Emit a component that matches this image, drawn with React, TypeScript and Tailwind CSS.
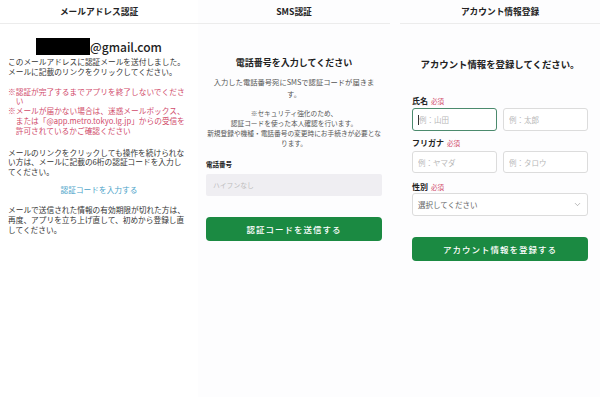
import { ChevronDown } from 'lucide-react';

const font = { fontFamily: '"Noto Sans CJK JP", "Noto Sans", sans-serif' };

const Header = ({ title }: { title: string }) => (
  <div className="h-[24px] flex items-center justify-center border-b border-[#ececec] text-[8.7px] font-bold text-[#222]">
    {title}
  </div>
);

const Required = () => <span className="ml-[3px] text-[6.5px] font-normal text-[#d14b6b]">必須</span>;

const Lines = ({ lines, className = '' }: { lines: string[]; className?: string }) => (
  <div className={className}>
    {lines.map((l, i) => (
      <div key={i} className="h-[9.8px] whitespace-nowrap">
        {l}
      </div>
    ))}
  </div>
);

const EmailPanel = () => (
  <div className="w-[198px] bg-white">
    <Header title="メールアドレス認証" />
    <div className="mt-[14px] flex justify-center items-center">
      <div className="w-[54px] h-[17px] bg-black" />
      <span className="text-[12px] leading-[17px] font-medium text-[#222]">@gmail.com</span>
    </div>
    <div className="px-2 text-[7.7px] leading-[9.8px] text-[#333]">
      <Lines
        className="mt-[2px]"
        lines={['このメールアドレスに認証メールを送付しました。', 'メールに記載のリンクをクリックしてください。']}
      />
      <Lines
        className="mt-[10px] text-[#d14b6b]"
        lines={[
          '※認証が完了するまでアプリを終了しないでくださ',
          '　い',
          '※メールが届かない場合は、迷惑メールボックス、',
          '　または「@app.metro.tokyo.lg.jp」からの受信を',
          '　許可されているかご確認ください',
        ]}
      />
      <Lines
        className="mt-[12px]"
        lines={[
          'メールのリンクをクリックしても操作を続けられな',
          'い方は、メールに記載の6桁の認証コードを入力し',
          'てください。',
        ]}
      />
      <p className="mt-[8px] leading-[10px] text-center text-[#4ba3c9]">認証コードを入力する</p>
      <Lines
        className="mt-[10px]"
        lines={[
          'メールで送信された情報の有効期限が切れた方は、',
          '再度、アプリを立ち上げ直して、初めから登録し直',
          'してください。',
        ]}
      />
    </div>
  </div>
);

const SmsPanel = () => (
  <div className="w-[192px] bg-[#fdfdfe]">
    <Header title="SMS認証" />
    <div className="px-2">
      <h2 className="mt-[33px] text-center text-[9px] leading-[12px] font-bold text-[#222]">電話番号を入力してください</h2>
      <p className="mt-[7px] text-center text-[7.3px] leading-[12px] text-[#555]">
        入力した電話番号宛にSMSで認証コードが届きま
        <br />
        す。
      </p>
      <p className="mt-[8px] text-center text-[6.7px] leading-[10px] text-[#555]">
        ※セキュリティ強化のため、
        <br />
        認証コードを使った本人確認を行います。
        <br />
        新規登録や機種・電話番号の変更時にお手続きが必要とな
        <br />
        ります。
      </p>
      <label className="mt-[11px] block text-[6.5px] leading-[10px] font-bold text-[#222]">電話番号</label>
      <input
        className="mt-[4px] w-full h-[22px] rounded-[2px] bg-[#efeef2] px-[7px] text-[6.8px] outline-none placeholder:text-[#bdbdbd]"
        placeholder="ハイフンなし"
      />
      <button className="mt-[21px] w-full h-[24px] rounded-[4px] bg-[#1b8a42] text-white text-[8.5px] font-medium tracking-[1px]">
        認証コードを送信する
      </button>
    </div>
  </div>
);

const AccountPanel = () => (
  <div className="w-[200px] bg-[#fdfdfe]">
    <Header title="アカウント情報登録" />
    <div className="px-3">
      <h2 className="mt-[34px] text-center text-[9.4px] leading-[12px] font-bold text-[#222]">アカウント情報を登録してください。</h2>
      <div className="mt-[26px] text-[8px] leading-[10px] font-bold text-[#222]">
        氏名<Required />
      </div>
      <div className="mt-[2px] grid grid-cols-2 gap-[6px]">
        <div className="h-[23px] rounded-[3px] border border-[#4b8a6d] bg-white flex items-center pl-[5px]">
          <span className="w-px h-[10px] bg-[#333]" />
          <span className="text-[7.5px] text-[#b8b8b8]">例：山田</span>
        </div>
        <input className="h-[23px] rounded-[3px] border border-[#dcdcdc] bg-white px-[5px] text-[7.5px] outline-none placeholder:text-[#b8b8b8]" placeholder="例：太郎" />
      </div>
      <div className="mt-[7px] text-[8px] leading-[10px] font-bold text-[#222]">
        フリガナ<Required />
      </div>
      <div className="mt-[3px] grid grid-cols-2 gap-[6px]">
        <input className="h-[22px] rounded-[3px] border border-[#dcdcdc] bg-white px-[5px] text-[7.5px] outline-none placeholder:text-[#b8b8b8]" placeholder="例：ヤマダ" />
        <input className="h-[22px] rounded-[3px] border border-[#dcdcdc] bg-white px-[5px] text-[7.5px] outline-none placeholder:text-[#b8b8b8]" placeholder="例：タロウ" />
      </div>
      <div className="mt-[9px] text-[8px] leading-[10px] font-bold text-[#222]">
        性別<Required />
      </div>
      <div className="mt-[1px] h-[23px] rounded-[3px] border border-[#dcdcdc] bg-white flex items-center justify-between px-[5px]">
        <span className="text-[7.5px] text-[#666]">選択してください</span>
        <ChevronDown size={9} strokeWidth={1.5} className="text-[#888]" />
      </div>
      <button className="mt-[21px] w-full h-[24px] rounded-[4px] bg-[#1b8a42] text-white text-[8.5px] font-medium tracking-[1px]">
        アカウント情報を登録する
      </button>
    </div>
  </div>
);

export default function App() {
  return (
    <div className="w-[600px] h-[397px] flex bg-[#fdfdfe] overflow-hidden" style={font}>
      <EmailPanel />
      <SmsPanel />
      <div className="w-[10px]" />
      <AccountPanel />
    </div>
  );
}
